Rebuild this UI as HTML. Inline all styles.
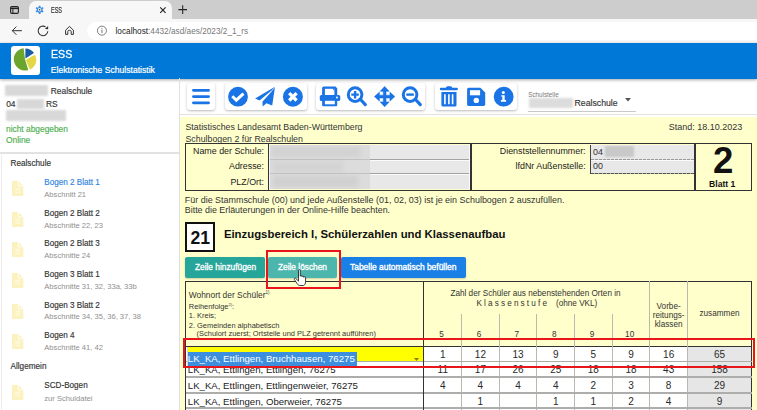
<!DOCTYPE html>
<html><head><meta charset="utf-8">
<style>
*{margin:0;padding:0;box-sizing:border-box}
html,body{width:757px;height:410px;overflow:hidden;background:#fff;font-family:"Liberation Sans",sans-serif}
.a{position:absolute}
.t{position:absolute;white-space:nowrap;line-height:1}
.r{-webkit-text-stroke:0.15px currentColor}
</style></head><body>
<!-- ===== browser chrome ===== -->
<div class="a" style="left:0;top:0;width:757px;height:19px;background:#cdcdcd"></div>
<div class="a" style="left:29px;top:0.5px;width:143px;height:19px;background:#f7f7f7;border-radius:7px 7px 0 0"></div>
<div class="a" style="left:0;top:19px;width:757px;height:24px;background:#f7f7f7"></div>
<!-- window icon -->
<svg class="a" style="left:0;top:0" width="30" height="20" viewBox="0 0 30 20"><rect x="10.6" y="6.5" width="7.8" height="6.9" rx="1.3" fill="none" stroke="#222" stroke-width="1.1"/><path d="M10.6 8.3H18.4" stroke="#222" stroke-width="1.6"/><path d="M12.9 8.3V13.4" stroke="#222" stroke-width="1"/></svg>
<!-- favicon gear -->
<svg class="a" style="left:0;top:0" width="60" height="20" viewBox="0 0 60 20"><path d="M38.73 5.69 L40.47 5.69 L40.43 6.92 L41.68 7.64 L42.72 6.99 L43.59 8.50 L42.51 9.07 L42.51 10.53 L43.59 11.10 L42.72 12.61 L41.68 11.96 L40.43 12.68 L40.47 13.91 L38.73 13.91 L38.77 12.68 L37.52 11.96 L36.48 12.61 L35.61 11.10 L36.69 10.53 L36.69 9.07 L35.61 8.50 L36.48 6.99 L37.52 7.64 L38.77 6.92Z" fill="#3a8ee6"/><circle cx="39.6" cy="9.8" r="1.7" fill="#f7f7f7"/><circle cx="39.6" cy="9.8" r="0.8" fill="#333"/></svg>
<div class="t" style="left:51px;top:5.9px;font-size:8.4px;color:#333;transform:scaleX(0.66);transform-origin:0 0;-webkit-text-stroke:0.2px #333">ESS</div>
<svg class="a" style="left:0;top:0" width="200" height="20" viewBox="0 0 200 20"><path d="M160.2 7.4L165.6 12.8M165.6 7.4L160.2 12.8" stroke="#222" stroke-width="1.1"/></svg>
<svg class="a" style="left:0;top:0" width="200" height="20" viewBox="0 0 200 20"><path d="M182.7 5.3V13.9M178.4 9.6H187" stroke="#222" stroke-width="1.05"/></svg>
<!-- nav icons -->
<svg class="a" style="left:0;top:0" width="80" height="42" viewBox="0 0 80 42"><path d="M21.9 30.7H12.3M16.4 26.6L12.3 30.7L16.4 34.8" fill="none" stroke="#333" stroke-width="1"/><path d="M47.78 31.22A4.8 4.8 0 1 1 45.6 26.9" fill="none" stroke="#333" stroke-width="1.05"/><path d="M48.1 25.9V29.2L44.8 28.9Z" fill="#333"/><path d="M65.6 30.2L69.5 26.4L73.4 30.2V34.4H71.2V31.6Q71.2 30.3 69.5 30.3Q67.8 30.3 67.8 31.6V34.4H65.6Z" fill="none" stroke="#333" stroke-width="1" stroke-linejoin="round"/></svg>


<div class="a" style="left:87px;top:21.5px;width:700px;height:18.5px;background:#fff;border-radius:9px"></div>
<svg class="a" style="left:0;top:0" width="120" height="42" viewBox="0 0 120 42"><circle cx="101.95" cy="30.65" r="4.5" fill="none" stroke="#666" stroke-width="0.85"/><path d="M101.95 29.6V33" stroke="#666" stroke-width="0.9"/><circle cx="101.95" cy="28.3" r="0.5" fill="#666"/></svg>
<div class="t" style="left:115.5px;top:28.1px;font-size:8.25px;color:#777"><span style="color:#222">localhost</span>:4432/asd/aes/2023/2_1_rs</div>

<!-- ===== app header ===== -->
<div class="a" style="left:0;top:42.5px;width:757px;height:36px;background:#0078d7;box-shadow:0 1px 3px rgba(0,0,0,.35)"></div>
<div class="a" style="left:10.5px;top:46px;width:29.5px;height:29px;background:#fff;border-radius:3px"></div>
<svg class="a" style="left:0;top:0" width="60" height="80" viewBox="0 0 60 80">
 <path d="M25 59.3L28.27 70.01A11.2 11.2 0 1 1 23.64 48.18Z" fill="#6ca52c"/>
 <path d="M25.8 60L34.71 54.64A10.4 10.4 0 0 1 29.86 69.57Z" fill="#e3d843"/>
 <path d="M25.4 58.6L25.40 48.40A10.2 10.2 0 0 1 33.95 53.04Z" fill="#175ca4"/>
</svg>
<div class="t" style="left:50.8px;top:48.9px;font-size:11.8px;color:#fff;transform:scaleX(0.9);transform-origin:0 0;-webkit-text-stroke:0.3px #fff">ESS</div>
<div class="t" style="left:50.8px;top:65.8px;font-size:8.6px;color:#fff;-webkit-text-stroke:0.2px #fff">Elektronische Schulstatistik</div>

<!-- ===== sidebar ===== -->
<div class="a" style="left:178.5px;top:78px;width:1px;height:332px;background:#e0e0e0"></div>
<div class="a" style="left:4.8px;top:85.3px;width:43.5px;height:11.2px;background:#d8d8d8;filter:blur(.9px)"></div>
<div class="t r" style="left:50.8px;top:87px;font-size:8.4px;color:#333">Realschule</div>
<div class="t r" style="left:6.2px;top:99.7px;font-size:8.4px;color:#333">04</div>
<div class="a" style="left:16.6px;top:98.6px;width:27px;height:10px;background:#d8d8d8;filter:blur(.9px)"></div>
<div class="t r" style="left:46px;top:99.7px;font-size:8.4px;color:#333">RS</div>
<div class="a" style="left:5.9px;top:110px;width:60px;height:10.6px;background:#d8d8d8;filter:blur(.9px)"></div>
<div class="t r" style="left:6px;top:124.7px;font-size:8.4px;color:#4caf50">nicht abgegeben</div>
<div class="t r" style="left:6px;top:136.3px;font-size:8.4px;color:#4caf50">Online</div>
<div class="a" style="left:0;top:152.2px;width:179px;height:1.5px;background:#e2e2e2"></div>
<div class="a" style="left:0.5px;top:153px;width:1px;height:257px;background:#ececec"></div>
<div class="t r" style="left:10.5px;top:160px;font-size:8.2px;color:#333">Realschule</div>

<svg class="a" style="left:11.7px;top:181.10000000000002px" width="12" height="15" viewBox="0 0 12 15"><path d="M0 0H6.4L11.3 4.9V15H0Z" fill="#fcf2c0"/><path d="M6.4 0V4.9H11.3" fill="none" stroke="#fff" stroke-width="0.9"/><path d="M3.1 7.3H8.2M3.1 9.1H8.2M3.1 11.3H8.2" stroke="#fffbe6" stroke-width="0.9"/></svg>
<div class="t r" style="left:44.3px;top:179.27px;font-size:8.15px;color:#2f86e0">Bogen 2 Blatt 1</div>
<div class="t" style="left:44.3px;top:191.04px;font-size:7.6px;color:#8f8f8f">Abschnitt 21</div>
<svg class="a" style="left:11.7px;top:211.70000000000002px" width="12" height="15" viewBox="0 0 12 15"><path d="M0 0H6.4L11.3 4.9V15H0Z" fill="#fcf2c0"/><path d="M6.4 0V4.9H11.3" fill="none" stroke="#fff" stroke-width="0.9"/><path d="M3.1 7.3H8.2M3.1 9.1H8.2M3.1 11.3H8.2" stroke="#fffbe6" stroke-width="0.9"/></svg>
<div class="t r" style="left:44.3px;top:209.87px;font-size:8.15px;color:#333">Bogen 2 Blatt 2</div>
<div class="t" style="left:44.3px;top:221.64px;font-size:7.6px;color:#8f8f8f">Abschnitte 22, 23</div>
<svg class="a" style="left:11.7px;top:242.3px" width="12" height="15" viewBox="0 0 12 15"><path d="M0 0H6.4L11.3 4.9V15H0Z" fill="#fcf2c0"/><path d="M6.4 0V4.9H11.3" fill="none" stroke="#fff" stroke-width="0.9"/><path d="M3.1 7.3H8.2M3.1 9.1H8.2M3.1 11.3H8.2" stroke="#fffbe6" stroke-width="0.9"/></svg>
<div class="t r" style="left:44.3px;top:240.47px;font-size:8.15px;color:#333">Bogen 2 Blatt 3</div>
<div class="t" style="left:44.3px;top:252.24px;font-size:7.6px;color:#8f8f8f">Abschnitte 24</div>
<svg class="a" style="left:11.7px;top:272.90000000000003px" width="12" height="15" viewBox="0 0 12 15"><path d="M0 0H6.4L11.3 4.9V15H0Z" fill="#fcf2c0"/><path d="M6.4 0V4.9H11.3" fill="none" stroke="#fff" stroke-width="0.9"/><path d="M3.1 7.3H8.2M3.1 9.1H8.2M3.1 11.3H8.2" stroke="#fffbe6" stroke-width="0.9"/></svg>
<div class="t r" style="left:44.3px;top:271.07px;font-size:8.15px;color:#333">Bogen 3 Blatt 1</div>
<div class="t" style="left:44.3px;top:282.84px;font-size:7.6px;color:#8f8f8f">Abschnitte 31, 32, 33a, 33b</div>
<svg class="a" style="left:11.7px;top:303.50000000000006px" width="12" height="15" viewBox="0 0 12 15"><path d="M0 0H6.4L11.3 4.9V15H0Z" fill="#fcf2c0"/><path d="M6.4 0V4.9H11.3" fill="none" stroke="#fff" stroke-width="0.9"/><path d="M3.1 7.3H8.2M3.1 9.1H8.2M3.1 11.3H8.2" stroke="#fffbe6" stroke-width="0.9"/></svg>
<div class="t r" style="left:44.3px;top:301.67px;font-size:8.15px;color:#333">Bogen 3 Blatt 2</div>
<div class="t" style="left:44.3px;top:313.44px;font-size:7.6px;color:#8f8f8f">Abschnitte 34, 35, 36, 37, 38</div>
<svg class="a" style="left:11.7px;top:334.1px" width="12" height="15" viewBox="0 0 12 15"><path d="M0 0H6.4L11.3 4.9V15H0Z" fill="#fcf2c0"/><path d="M6.4 0V4.9H11.3" fill="none" stroke="#fff" stroke-width="0.9"/><path d="M3.1 7.3H8.2M3.1 9.1H8.2M3.1 11.3H8.2" stroke="#fffbe6" stroke-width="0.9"/></svg>
<div class="t r" style="left:44.3px;top:332.27px;font-size:8.15px;color:#333">Bogen 4</div>
<div class="t" style="left:44.3px;top:344.04px;font-size:7.6px;color:#8f8f8f">Abschnitte 41, 42</div>
<div class="t r" style="left:10.5px;top:363.33px;font-size:8.2px;color:#333">Allgemein</div>
<svg class="a" style="left:11.7px;top:385.0px" width="12" height="15" viewBox="0 0 12 15"><path d="M0 0H6.4L11.3 4.9V15H0Z" fill="#fcf2c0"/><path d="M6.4 0V4.9H11.3" fill="none" stroke="#fff" stroke-width="0.9"/><path d="M3.1 7.3H8.2M3.1 9.1H8.2M3.1 11.3H8.2" stroke="#fffbe6" stroke-width="0.9"/></svg>
<div class="t r" style="left:44.3px;top:382.27px;font-size:8.15px;color:#333">SCD-Bogen</div>
<div class="t" style="left:44.3px;top:394.94px;font-size:7.6px;color:#8f8f8f">zur Schuldatei</div>

<!-- ===== toolbar ===== -->
<div class="a" style="left:179.5px;top:114px;width:578px;height:1px;background:#e2e2e2"></div>
<div class="a" style="left:187px;top:83.1px;width:28px;height:27px;background:#fff;border-radius:3px;box-shadow:0 1px 2.5px rgba(0,0,0,.28)"></div>
<div class="a" style="left:224.5px;top:83.1px;width:82px;height:27px;background:#fff;border-radius:3px;box-shadow:0 1px 2.5px rgba(0,0,0,.28)"></div>
<div class="a" style="left:316px;top:83.1px;width:108.5px;height:27px;background:#fff;border-radius:3px;box-shadow:0 1px 2.5px rgba(0,0,0,.28)"></div>
<div class="a" style="left:435px;top:83.1px;width:81.5px;height:27px;background:#fff;border-radius:3px;box-shadow:0 1px 2.5px rgba(0,0,0,.28)"></div>
<svg class="a" style="left:0;top:0" width="757" height="410" viewBox="0 0 757 410">
<!-- hamburger -->
<path d="M193.4 90.3H208.6M193.4 96.55H208.6M193.4 102.87H208.6" stroke="#1a74e6" stroke-width="2.7" stroke-linecap="round"/>
<!-- check circle -->
<circle cx="238" cy="96.7" r="9.9" fill="#1a74e6"/>
<path d="M232.3 96.3L236.3 100.2L243.5 93.6" fill="none" stroke="#fff" stroke-width="3"/>
<!-- plane -->
<path d="M255.13 98.4L274.95 86.78L271.53 90.54L259.57 100.45Z" fill="#1a74e6"/>
<path d="M274.95 87.13L272.21 105.58L266.4 103.33L262.65 106.61L262.44 101.82L272.01 90.89Z" fill="#1a74e6"/>
<!-- x circle -->
<circle cx="292.9" cy="96.8" r="10" fill="#1a74e6"/>
<path d="M289.2 93.1L296.6 100.5M296.6 93.1L289.2 100.5" stroke="#fff" stroke-width="3.3"/>
<!-- print -->
<path d="M322.1 88A1.6 1.6 0 0 1 323.7 86.4H335.4L337.2 88.2V95.5H322.1Z" fill="#1a74e6"/>
<rect x="324.9" y="88.8" width="9.5" height="6.5" fill="#fff"/>
<path d="M332.4 88.8H334.4V90.8Z" fill="#1a74e6"/>
<rect x="319.8" y="95" width="20.45" height="6" rx="1.6" fill="#1a74e6"/>
<circle cx="336.9" cy="97.5" r="0.95" fill="#fff"/>
<rect x="322.1" y="99" width="15.1" height="7.25" rx="1.2" fill="#1a74e6"/>
<rect x="324.9" y="100.8" width="9.9" height="3.5" fill="#fff"/>
<!-- zoom in -->
<circle cx="355.1" cy="94.6" r="6.8" fill="none" stroke="#1a74e6" stroke-width="3"/>
<path d="M361 100L365.3 104.6" stroke="#1a74e6" stroke-width="3.2" stroke-linecap="round"/>
<path d="M355.1 90.9V98.4M351.3 94.6H358.8" stroke="#1a74e6" stroke-width="2.4"/>
<!-- move -->
<path transform="translate(384.66 96.6)" d="M0 -10.2L4.45 -5.3H1.35V-1.35H5.3V-4.45L10.2 0L5.3 4.45V1.35H1.35V5.3H4.45L0 10.2L-4.45 5.3H-1.35V1.35H-5.3V4.45L-10.2 0L-5.3 -4.45V-1.35H-1.35V-5.3H-4.45Z" fill="#1a74e6" stroke="#1a74e6" stroke-width="0.6" stroke-linejoin="round"/>
<!-- zoom out -->
<circle cx="410.1" cy="94.6" r="6.8" fill="none" stroke="#1a74e6" stroke-width="3"/>
<path d="M416 100L420.3 104.6" stroke="#1a74e6" stroke-width="3.2" stroke-linecap="round"/>
<path d="M406.3 94.6H413.8" stroke="#1a74e6" stroke-width="2.4"/>
<!-- trash -->
<path d="M446 87.9A1.6 1.6 0 0 1 447.6 86.2H450.5A1.6 1.6 0 0 1 452.1 87.9Z" fill="#1a74e6"/>
<rect x="439.8" y="87.8" width="18.1" height="2.4" rx="1.1" fill="#1a74e6"/>
<path d="M441.4 91.9H456.5V105A1.6 1.6 0 0 1 454.9 106.6H443A1.6 1.6 0 0 1 441.4 105Z" fill="#1a74e6"/>
<path d="M444.9 94.3V104.2M448.9 94.3V104.2M452.6 94.3V104.2" stroke="#fff" stroke-width="1.6"/>
<!-- floppy -->
<path d="M467.1 89.4A1.6 1.6 0 0 1 468.7 87.8H480.4L485.2 92.4V104.3A1.6 1.6 0 0 1 483.6 105.9H468.7A1.6 1.6 0 0 1 467.1 104.3Z" fill="#1a74e6"/>
<rect x="469.9" y="90.2" width="10.2" height="5.1" fill="#fff"/>
<circle cx="476.3" cy="100.4" r="2.7" fill="#fff"/>
<!-- info -->
<circle cx="503.66" cy="96.7" r="9.9" fill="#1a74e6"/>
<circle cx="503.3" cy="92.5" r="1.55" fill="#fff"/>
<path d="M501.2 95.2H504.7V100.1H506.05V101.8H500.9V100.1H502.3V96.6H501.2Z" fill="#fff"/>
</svg>
<!-- Schulstelle select -->
<div class="t" style="left:528.2px;top:91.5px;font-size:6.3px;color:#777">Schulstelle</div>
<div class="a" style="left:529px;top:98px;width:43.5px;height:10.3px;background:#dcdcdc;filter:blur(.8px)"></div>
<div class="t r" style="left:574.6px;top:98.6px;font-size:8.7px;color:#333">Realschule</div>
<svg class="a" style="left:625px;top:98px" width="6" height="4" viewBox="0 0 6 4"><path d="M0 0H6L3 3.5Z" fill="#555"/></svg>
<div class="a" style="left:528px;top:111px;width:107.5px;height:1px;background:#c9c9c9"></div>

<!-- ===== yellow content ===== -->
<div class="a" style="left:180px;top:117px;width:577px;height:293px;background:#ffffcc"></div>
<div class="t" style="left:185.5px;top:122.9px;font-size:8.8px;color:#333">Statistisches Landesamt Baden-Württemberg</div>
<div class="t" style="left:185.5px;top:134.5px;font-size:8.8px;color:#333">Schulbogen 2 für Realschulen</div>
<div class="t" style="left:668.8px;top:123.2px;font-size:9px;color:#333">Stand: 18.10.2023</div>

<!-- header box -->
<div class="a" style="left:185px;top:143px;width:567px;height:47.5px;border:1.5px solid #333"></div>
<div class="a" style="left:267.8px;top:143px;width:1.5px;height:47.5px;background:#333"></div>
<div class="a" style="left:470px;top:143px;width:1.5px;height:47.5px;background:#333"></div>
<div class="a" style="left:694px;top:143px;width:1.5px;height:47.5px;background:#333"></div>
<div class="a" style="left:269.3px;top:144.5px;width:200.7px;height:44.5px;background:#e8e8e8"></div>
<div class="a" style="left:269.3px;top:158.6px;width:200.7px;height:1px;background:#a2a2a2"></div><div class="a" style="left:269.3px;top:159.6px;width:200.7px;height:1px;background:#fafafa"></div>
<div class="a" style="left:269.3px;top:172.9px;width:200.7px;height:1px;background:#a2a2a2"></div><div class="a" style="left:269.3px;top:173.9px;width:200.7px;height:1px;background:#fafafa"></div><div class="a" style="left:469px;top:144.5px;width:1px;height:44.5px;background:#fafafa"></div>
<div class="a" style="left:270px;top:144.5px;width:99.5px;height:44.5px;background:#dcdcdc;overflow:hidden"><div class="a" style="left:2px;top:2px;width:88px;height:10px;background:#d2d2d2;filter:blur(2.2px)"></div><div class="a" style="left:3px;top:17px;width:70px;height:10px;background:#d3d3d3;filter:blur(2.2px)"></div><div class="a" style="left:3px;top:31px;width:85px;height:11px;background:#d0d0d0;filter:blur(2.2px)"></div></div>
<div class="a" style="left:270px;top:158.6px;width:99.5px;height:1px;background:rgba(150,150,150,.35)"></div><div class="a" style="left:270px;top:172.9px;width:99.5px;height:1px;background:rgba(150,150,150,.35)"></div>
<div class="a" style="left:269.3px;top:144.5px;width:1px;height:44.5px;background:#f4f4f4"></div>
<div class="t" style="left:193px;top:146.6px;width:71px;text-align:right;font-size:8.9px;color:#222">Name der Schule:</div>
<div class="t" style="left:193px;top:162.3px;width:71px;text-align:right;font-size:8.9px;color:#222">Adresse:</div>
<div class="t" style="left:193px;top:178.1px;width:71px;text-align:right;font-size:8.9px;color:#222">PLZ/Ort:</div>
<div class="t" style="left:480px;top:147.2px;width:105.6px;text-align:right;font-size:8.9px;color:#222">Dienststellennummer:</div>
<div class="t" style="left:480px;top:161.8px;width:105.6px;text-align:right;font-size:8.9px;color:#222">lfdNr Außenstelle:</div>
<div class="a" style="left:590px;top:144.5px;width:104px;height:29px;background:#e8e8e8;border-left:1.2px solid #444"></div>
<div class="a" style="left:591px;top:158.6px;width:103px;height:1px;background:repeating-linear-gradient(90deg,#999 0 3px,#e0e0e0 3px 4px)"></div><div class="a" style="left:591px;top:159.6px;width:103px;height:1px;background:#fafafa"></div>
<div class="a" style="left:591px;top:172.9px;width:103px;height:1px;background:repeating-linear-gradient(90deg,#555 0 3px,#aaa 3px 4px)"></div>
<div class="t" style="left:593px;top:147.7px;font-size:8.9px;color:#333">04</div>
<div class="a" style="left:604.8px;top:145.8px;width:29px;height:11px;background:#c8c8c8;filter:blur(.8px)"></div>
<div class="t" style="left:593px;top:162.2px;font-size:8.9px;color:#333">00</div>
<div class="t" style="left:713px;top:143.4px;font-size:36.6px;font-weight:bold;color:#111">2</div>
<div class="t" style="left:709px;top:180.2px;font-size:8.65px;font-weight:bold;color:#111">Blatt 1</div>

<div class="t" style="left:184.8px;top:195.5px;font-size:8.95px;color:#333">Für die Stammschule (00) und jede Außenstelle (01, 02, 03) ist je ein Schulbogen 2 auszufüllen.</div>
<div class="t" style="left:184.8px;top:206px;font-size:8.9px;color:#333">Bitte die Erläuterungen in der Online-Hilfe beachten.</div>

<!-- section 21 -->
<div class="a" style="left:184.8px;top:222px;width:30.3px;height:29.7px;background:#fff;border:2px solid #111"></div>
<div class="t" style="left:190.5px;top:230px;font-size:17.6px;font-weight:bold;color:#111">21</div>
<div class="t" style="left:223.9px;top:228.8px;font-size:11.37px;font-weight:bold;color:#111">Einzugsbereich I, Schülerzahlen und Klassenaufbau</div>

<!-- buttons -->
<div class="a" style="left:185px;top:257px;width:80px;height:20.7px;background:#26a69a;border-radius:2px;box-shadow:0 1px 2px rgba(0,0,0,.2)"></div>
<div class="t" style="left:194.9px;top:262.7px;font-size:8.35px;color:#fff;-webkit-text-stroke:0.3px #fff">Zeile hinzufügen</div>
<div class="a" style="left:268px;top:257px;width:69px;height:20.7px;background:#4db6ac;border-radius:2px;box-shadow:0 1px 2px rgba(0,0,0,.2)"></div>
<div class="t" style="left:278px;top:262.7px;font-size:8.3px;color:#fff;-webkit-text-stroke:0.3px #fff">Zeile löschen</div>
<div class="a" style="left:341px;top:256.6px;width:125.3px;height:21.2px;background:#1a80e5;border-radius:2px;box-shadow:0 1px 2px rgba(0,0,0,.2)"></div>
<div class="t" style="left:350px;top:262.9px;font-size:8.45px;color:#fff;-webkit-text-stroke:0.35px #fff">Tabelle automatisch befüllen</div>

<!-- ===== table ===== -->
<div class="a" style="left:185px;top:281px;width:567px;height:140px;border:1.5px solid #333;border-bottom:none"></div>
<div class="a" style="left:423.1px;top:281px;width:1.2px;height:129px;background:#333"></div>
<div class="t" style="left:188.8px;top:290.76px;font-size:8.4px;color:#333">Wohnort der Schüler<sup style="font-size:4.5px;vertical-align:4px">1)</sup></div>
<div class="t" style="left:188.8px;top:302.97px;font-size:7.45px;color:#333">Reihenfolge<sup style="font-size:4px;vertical-align:3px">2)</sup>:</div>
<div class="t" style="left:188.8px;top:312.47px;font-size:7.45px;color:#333">1. Kreis;</div>
<div class="t" style="left:188.8px;top:321.67px;font-size:7.45px;color:#333">2. Gemeinden alphabetisch</div>
<div class="t" style="left:196.6px;top:330.47px;font-size:7.45px;color:#333">(Schulort zuerst; Ortsteile und PLZ getrennt aufführen)</div>
<div class="t" style="left:422.6px;top:290.03px;width:225.8px;text-align:center;font-size:8.2px;color:#333">Zahl der Schüler aus nebenstehenden Orten in</div>
<div class="t" style="left:424px;top:300.13px;width:225.8px;text-align:center;font-size:8.2px;color:#333"><span style="letter-spacing:2.15px">Klassenstufe</span>&nbsp;&nbsp; (ohne VKL)</div>
<div class="t" style="left:422.7px;top:330.83px;width:37.6px;text-align:center;font-size:8.2px;color:#333">5</div>
<div class="t" style="left:460.3px;top:330.83px;width:37.6px;text-align:center;font-size:8.2px;color:#333">6</div>
<div class="t" style="left:497.9px;top:330.83px;width:37.7px;text-align:center;font-size:8.2px;color:#333">7</div>
<div class="t" style="left:535.6px;top:330.83px;width:37.6px;text-align:center;font-size:8.2px;color:#333">8</div>
<div class="t" style="left:573.2px;top:330.83px;width:37.6px;text-align:center;font-size:8.2px;color:#333">9</div>
<div class="t" style="left:610.8px;top:330.83px;width:37.7px;text-align:center;font-size:8.2px;color:#333">10</div>
<div class="t" style="left:649.8px;top:303.23px;width:37.7px;text-align:center;font-size:8.2px;color:#333">Vorbe-</div>
<div class="t" style="left:649.8px;top:312.13px;width:37.7px;text-align:center;font-size:8.2px;color:#333">reitungs-</div>
<div class="t" style="left:649.8px;top:321.03px;width:37.7px;text-align:center;font-size:8.2px;color:#333">klassen</div>
<div class="t" style="left:687.5px;top:309.63px;width:64px;text-align:center;font-size:8.2px;color:#333">zusammen</div>
<div class="a" style="left:461.1px;top:314px;width:1px;height:32px;background:#b9b9b0"></div>
<div class="a" style="left:498.7px;top:314px;width:1px;height:32px;background:#b9b9b0"></div>
<div class="a" style="left:536.4px;top:314px;width:1px;height:32px;background:#b9b9b0"></div>
<div class="a" style="left:574.0px;top:314px;width:1px;height:32px;background:#b9b9b0"></div>
<div class="a" style="left:611.6px;top:314px;width:1px;height:32px;background:#b9b9b0"></div>
<div class="a" style="left:649.3px;top:281px;width:1px;height:130px;background:#b9b9b0"></div>
<div class="a" style="left:687.0px;top:281px;width:1px;height:130px;background:#b9b9b0"></div>
<div class="a" style="left:186px;top:345.5px;width:566px;height:1px;background:#333"></div>
<div class="a" style="left:186px;top:346.5px;width:501.5px;height:64px;background:#fff"></div>
<div class="a" style="left:688px;top:346.5px;width:62.5px;height:64px;background:#e6e6e6"></div>
<div class="a" style="left:461.1px;top:346px;width:1px;height:65px;background:#b9b9b0"></div>
<div class="a" style="left:498.7px;top:346px;width:1px;height:65px;background:#b9b9b0"></div>
<div class="a" style="left:536.4px;top:346px;width:1px;height:65px;background:#b9b9b0"></div>
<div class="a" style="left:574.0px;top:346px;width:1px;height:65px;background:#b9b9b0"></div>
<div class="a" style="left:611.6px;top:346px;width:1px;height:65px;background:#b9b9b0"></div>
<div class="a" style="left:649.3px;top:346px;width:1px;height:65px;background:#b9b9b0"></div>
<div class="a" style="left:687.0px;top:346px;width:1px;height:65px;background:#b9b9b0"></div>
<div class="a" style="left:186px;top:360.5px;width:566px;height:1.5px;background:#adadab"></div>
<div class="a" style="left:186px;top:376.3px;width:566px;height:1.5px;background:#adadab"></div>
<div class="a" style="left:186px;top:392.2px;width:566px;height:1.5px;background:#adadab"></div>
<div class="a" style="left:186px;top:407.4px;width:566px;height:1.5px;background:#adadab"></div>
<div class="a" style="left:186.5px;top:347px;width:236px;height:14px;background:#ffff00"></div>
<div class="a" style="left:186.7px;top:352px;width:170.2px;height:14.5px;background:#3b8fde"></div>
<div class="a" style="left:186.5px;top:347px;width:0.8px;height:19px;background:#d8d8d8"></div>
<svg class="a" style="left:414px;top:357.6px" width="5" height="3" viewBox="0 0 5 3"><path d="M0 0H5L2.5 3Z" fill="#8a7d00"/></svg>
<div class="t" style="left:187.8px;top:354.00px;font-size:9.65px;color:#fff">LK_KA, Ettlingen, Bruchhausen, 76275</div>
<div class="t" style="left:424px;top:349.80px;width:37.6px;text-align:center;font-size:10px;color:#2a2a2a">1</div>
<div class="t" style="left:461.6px;top:349.80px;width:37.6px;text-align:center;font-size:10px;color:#2a2a2a">12</div>
<div class="t" style="left:499.2px;top:349.80px;width:37.7px;text-align:center;font-size:10px;color:#2a2a2a">13</div>
<div class="t" style="left:536.9px;top:349.80px;width:37.6px;text-align:center;font-size:10px;color:#2a2a2a">9</div>
<div class="t" style="left:574.5px;top:349.80px;width:37.6px;text-align:center;font-size:10px;color:#2a2a2a">5</div>
<div class="t" style="left:612.1px;top:349.80px;width:37.7px;text-align:center;font-size:10px;color:#2a2a2a">9</div>
<div class="t" style="left:649.8px;top:349.80px;width:37.7px;text-align:center;font-size:10px;color:#2a2a2a">16</div>
<div class="t" style="left:687.5px;top:349.80px;width:64.0px;text-align:center;font-size:10px;color:#2a2a2a">65</div>
<div class="t" style="left:187.8px;top:365.20px;font-size:9.65px;color:#222">LK_KA, Ettlingen, Ettlingen, 76275</div>
<div class="t" style="left:424px;top:365.40px;width:37.6px;text-align:center;font-size:10px;color:#2a2a2a">11</div>
<div class="t" style="left:461.6px;top:365.40px;width:37.6px;text-align:center;font-size:10px;color:#2a2a2a">17</div>
<div class="t" style="left:499.2px;top:365.40px;width:37.7px;text-align:center;font-size:10px;color:#2a2a2a">26</div>
<div class="t" style="left:536.9px;top:365.40px;width:37.6px;text-align:center;font-size:10px;color:#2a2a2a">25</div>
<div class="t" style="left:574.5px;top:365.40px;width:37.6px;text-align:center;font-size:10px;color:#2a2a2a">18</div>
<div class="t" style="left:612.1px;top:365.40px;width:37.7px;text-align:center;font-size:10px;color:#2a2a2a">18</div>
<div class="t" style="left:649.8px;top:365.40px;width:37.7px;text-align:center;font-size:10px;color:#2a2a2a">43</div>
<div class="t" style="left:687.5px;top:365.40px;width:64.0px;text-align:center;font-size:10px;color:#2a2a2a">158</div>
<div class="t" style="left:187.8px;top:381.00px;font-size:9.65px;color:#222">LK_KA, Ettlingen, Ettlingenweier, 76275</div>
<div class="t" style="left:424px;top:381.20px;width:37.6px;text-align:center;font-size:10px;color:#2a2a2a">4</div>
<div class="t" style="left:461.6px;top:381.20px;width:37.6px;text-align:center;font-size:10px;color:#2a2a2a">4</div>
<div class="t" style="left:499.2px;top:381.20px;width:37.7px;text-align:center;font-size:10px;color:#2a2a2a">4</div>
<div class="t" style="left:536.9px;top:381.20px;width:37.6px;text-align:center;font-size:10px;color:#2a2a2a">4</div>
<div class="t" style="left:574.5px;top:381.20px;width:37.6px;text-align:center;font-size:10px;color:#2a2a2a">2</div>
<div class="t" style="left:612.1px;top:381.20px;width:37.7px;text-align:center;font-size:10px;color:#2a2a2a">3</div>
<div class="t" style="left:649.8px;top:381.20px;width:37.7px;text-align:center;font-size:10px;color:#2a2a2a">8</div>
<div class="t" style="left:687.5px;top:381.20px;width:64.0px;text-align:center;font-size:10px;color:#2a2a2a">29</div>
<div class="t" style="left:187.8px;top:396.90px;font-size:9.65px;color:#222">LK_KA, Ettlingen, Oberweier, 76275</div>
<div class="t" style="left:461.6px;top:397.10px;width:37.6px;text-align:center;font-size:10px;color:#2a2a2a">1</div>
<div class="t" style="left:536.9px;top:397.10px;width:37.6px;text-align:center;font-size:10px;color:#2a2a2a">1</div>
<div class="t" style="left:574.5px;top:397.10px;width:37.6px;text-align:center;font-size:10px;color:#2a2a2a">1</div>
<div class="t" style="left:612.1px;top:397.10px;width:37.7px;text-align:center;font-size:10px;color:#2a2a2a">2</div>
<div class="t" style="left:649.8px;top:397.10px;width:37.7px;text-align:center;font-size:10px;color:#2a2a2a">4</div>
<div class="t" style="left:687.5px;top:397.10px;width:64.0px;text-align:center;font-size:10px;color:#2a2a2a">9</div>
<div class="a" style="left:423.1px;top:346px;width:1.2px;height:64px;background:#333"></div>

<!-- cursor -->
<svg class="a" style="left:292.6px;top:268.6px" width="15.4" height="17.6" viewBox="0 0 14 16"><path d="M5 1.2C5 0.4 6.6 0.4 6.6 1.2V6.5C6.6 5.8 8.2 5.8 8.2 6.6V7C8.2 6.3 9.8 6.3 9.8 7.1V7.5C9.8 6.9 11.4 6.9 11.4 7.7V11.5C11.4 13.5 10.5 15 9.5 15H6C5 15 4.2 14 3.5 13L1.2 9.5C0.8 8.8 1.8 8 2.5 8.6L5 11Z" fill="#fff" stroke="#222" stroke-width="0.8"/></svg>

<!-- red highlight rectangles -->
<div class="a" style="left:266px;top:250.3px;width:74.5px;height:39px;border:2.2px solid #e8161b"></div>
<div class="a" style="left:183px;top:338.2px;width:572px;height:29.9px;border:2.4px solid #e8161b"></div>
</body></html>
